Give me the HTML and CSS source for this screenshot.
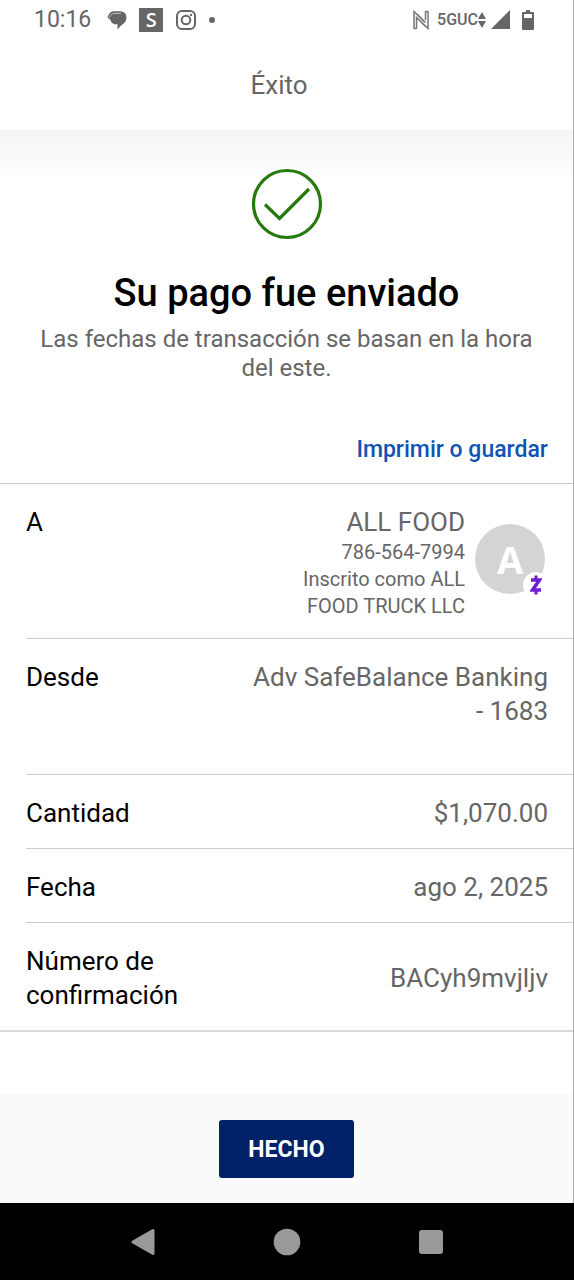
FILE: index.html
```html
<!DOCTYPE html>
<html lang="es">
<head>
<meta charset="utf-8">
<meta name="viewport" content="width=device-width, initial-scale=1">
<title>Éxito</title>
<link rel="stylesheet" href="styles.css">
</head>
<body>
<div class="screen">
  <div class="status-bar">
    <div class="status-left">
      <span class="clock">10:16</span>
      <svg width="20" height="20" viewBox="0 0 20 20" aria-hidden="true">
        <path d="M6.500 1.200H13C17 1.200 19.500 4 19.500 7.500C19.500 11 17 14 14.500 15L10.500 19.500V14.300H8.500C5.500 14.300 4 11.500 3 9.500L.5 7.500C1.500 3.500 3.500 1.500 6.500 1.200z" fill="#666"/>
        <path d="M2.500 7.500C3.500 4.300 5.500 3.300 9 3.300h5" fill="none" stroke="#ddd" stroke-width=".8"/>
      </svg>
      <span class="app-badge">S</span>
      <svg width="22" height="22" viewBox="0 0 22 22" fill="none" stroke="#666" stroke-width="2" aria-hidden="true">
        <rect x="2" y="2" width="18" height="18" rx="5"/>
        <circle cx="11" cy="11" r="4.300"/>
        <circle cx="16" cy="6" r="1.200" fill="#666" stroke="none"/>
      </svg>
      <span class="more-dot"></span>
    </div>
    <div class="status-right">
      <svg class="nfc" width="16" height="20" viewBox="0 0 16 20" fill="none" stroke="#777" stroke-width="1.500" aria-hidden="true">
        <path d="M1 19V1.500L11.500 12M3.500 19V7.500L15 18.500V1M12.500 1v9M4 4L12.500 12.500M1 18.500h2.500M12.500 1.500H15M3.500 7.500L12 16"/>
      </svg>
      <span class="network">5GUC</span>
      <svg class="updown" width="8" height="16" viewBox="0 0 8 16" fill="#666" aria-hidden="true">
        <path d="M4 0L8 7H0zM4 16L8 9H0z"/>
      </svg>
      <svg class="signal" width="19" height="19" viewBox="0 0 19 19" fill="#666" aria-hidden="true"><path d="M19 0v19H0z"/></svg>
      <svg width="12" height="20" viewBox="0 0 12 20" aria-hidden="true">
        <path d="M4 0h4v2h3q1 0 1 1v16q0 1-1 1H1q-1 0-1-1V3q0-1 1-1h3z" fill="#666"/>
        <path d="M2 4h8v4H2z" fill="#fff"/>
      </svg>
    </div>
  </div>

  <header class="app-bar"><h1 class="app-title">Éxito</h1></header>

  <main class="content">
    <section class="hero">
      <svg width="72" height="72" viewBox="0 0 72 72" fill="none" stroke="#267a0c" stroke-width="3.200" aria-hidden="true">
        <circle cx="36" cy="36" r="33.500"/>
        <path d="M14 36.500L28.500 50.500L58 21"/>
      </svg>
      <h2 class="headline">Su pago fue enviado</h2>
      <p class="note">Las fechas de transacción se basan en la hora del este.</p>
    </section>

    <div class="actions"><a class="save-link" href="#guardar">Imprimir o guardar</a></div>

    <dl class="details">
      <div class="row row-payee">
        <dt>A</dt>
        <dd class="payee">
          <div class="payee-text">
            <div class="payee-name">ALL FOOD</div>
            <div class="payee-meta">786-564-7994</div>
            <div class="payee-meta">Inscrito como ALL FOOD TRUCK LLC</div>
          </div>
          <div class="avatar">A
            <span class="zelle">
              <svg width="12" height="20" viewBox="0 0 12 20" fill="none" stroke="#6d1ed4" aria-hidden="true">
                <path d="M1 5h8.500L2.500 15H11" stroke-width="3.600"/>
                <path d="M6 .5v4M6 15.500v4" stroke-width="3"/>
              </svg>
            </span>
          </div>
        </dd>
      </div>
      <div class="row row-tall"><dt>Desde</dt><dd>Adv SafeBalance Banking - 1683</dd></div>
      <div class="row"><dt>Cantidad</dt><dd>$1,070.00</dd></div>
      <div class="row"><dt>Fecha</dt><dd>ago 2, 2025</dd></div>
      <div class="row row-center"><dt>Número de confirmación</dt><dd>BACyh9mvjljv</dd></div>
    </dl>
  </main>

  <footer class="footer"><button class="done" type="button">HECHO</button></footer>
</div>

<nav class="nav-bar" aria-label="Sistema">
  <button class="nav-button" type="button" aria-label="Atrás">
    <svg width="28" height="28" viewBox="0 0 28 28" fill="#999" stroke="#999" stroke-width="3" stroke-linejoin="round" aria-hidden="true"><path d="M4 14L24 2.500v23z"/></svg>
  </button>
  <button class="nav-button" type="button" aria-label="Inicio">
    <svg width="28" height="28" viewBox="0 0 28 28" fill="#999" aria-hidden="true"><circle cx="14" cy="14" r="13.300"/></svg>
  </button>
  <button class="nav-button" type="button" aria-label="Recientes">
    <svg width="28" height="28" viewBox="0 0 28 28" fill="#999" aria-hidden="true"><rect x="2" y="2" width="24" height="24" rx="3"/></svg>
  </button>
</nav>
</body>
</html>
```
FILE: styles.css
```css
* { box-sizing: border-box; }

body {
  margin: 0;
  min-height: 100vh;
  display: flex;
  flex-direction: column;
  font-family: Roboto, "Liberation Sans", sans-serif;
  color: #666;
  background: #fff;
}

h1, h2, p, dl, dd { margin: 0; }

.screen {
  flex: 1;
  display: flex;
  flex-direction: column;
  border-right: 1px solid #aaa;
}

.status-bar {
  display: flex;
  align-items: center;
  justify-content: space-between;
  height: 39px;
  padding: 0 39px 0 34px;
}

.status-left, .status-right { display: flex; align-items: center; }
.status-left { gap: 12px; }
.clock { font-size: 23px; margin-right: 4px; }

.app-badge {
  width: 24px;
  height: 24px;
  line-height: 24px;
  text-align: center;
  font-family: "Open Sans", sans-serif;
  font-size: 20px;
  font-weight: 600;
  color: #fff;
  background: #666;
}

.more-dot {
  width: 6px;
  height: 6px;
  border-radius: 50%;
  background: #666;
}

.nfc { margin-right: 8px; }
.network { font-size: 16px; font-weight: 500; }
.updown { margin-right: 5px; }
.signal { margin-right: 12px; }

.app-bar {
  height: 91px;
  display: flex;
  align-items: center;
  justify-content: center;
  padding-right: 15px;
}

.app-title { font-size: 26px; font-weight: 400; line-height: 34px; }

.content { flex: 1; background: linear-gradient(#f4f4f4, #fff 50px); }

.hero {
  display: flex;
  flex-direction: column;
  align-items: center;
  padding: 38px 32px 0;
  text-align: center;
}

.headline {
  margin-top: 28px;
  font-size: 38px;
  font-weight: 500;
  line-height: 50px;
  color: #000;
}

.note { margin-top: 7px; font-size: 24px; line-height: 29px; }

.actions {
  display: flex;
  justify-content: flex-end;
  padding: 50px 25px 16px;
}

.save-link {
  font-size: 23px;
  font-weight: 500;
  line-height: 34px;
  color: #0f54b5;
  text-decoration: none;
}

.details {
  padding-left: 26px;
  border-top: 1px solid #ccc;
  border-bottom: 2px solid #dadada;
  font-size: 26px;
  line-height: 34px;
}

.row {
  display: flex;
  justify-content: space-between;
  gap: 24px;
  padding: 21px 25px 18px 0;
}

.row + .row { border-top: 1px solid #ccc; }
.row-payee { padding-right: 28px; }
.row-tall { padding-bottom: 46px; }
.row-center { align-items: center; }
.row dt { flex: 0 1 180px; color: #000; }
.row dd { flex: 0 1 304px; text-align: right; }

.row .payee {
  display: flex;
  align-items: flex-start;
  justify-content: flex-end;
  gap: 10px;
}

.payee-text { width: 180px; }
.payee-meta { font-size: 20px; line-height: 27px; }

.avatar {
  position: relative;
  flex: none;
  width: 70px;
  height: 70px;
  margin-top: 19px;
  border-radius: 50%;
  line-height: 70px;
  text-align: center;
  font-family: "Open Sans", sans-serif;
  font-size: 38px;
  font-weight: 700;
  color: #fff;
  background: #d4d4d4;
}

.zelle {
  position: absolute;
  right: -4px;
  bottom: -4px;
  display: flex;
  align-items: center;
  justify-content: center;
  width: 26px;
  height: 26px;
  border-radius: 50%;
  background: #fff;
}

.footer {
  display: flex;
  justify-content: center;
  padding: 26px 25px 25px;
  background: #fafafa;
}

.done {
  min-width: 135px;
  height: 58px;
  border: 0;
  border-radius: 3px;
  font: 700 23px Roboto, "Liberation Sans", sans-serif;
  color: #fff;
  background: #012169;
}

.nav-bar {
  display: flex;
  justify-content: center;
  gap: 84px;
  height: 77px;
  background: #000;
}

.nav-button {
  display: flex;
  align-items: center;
  justify-content: center;
  width: 60px;
  padding: 0;
  border: 0;
  background: none;
}
```
